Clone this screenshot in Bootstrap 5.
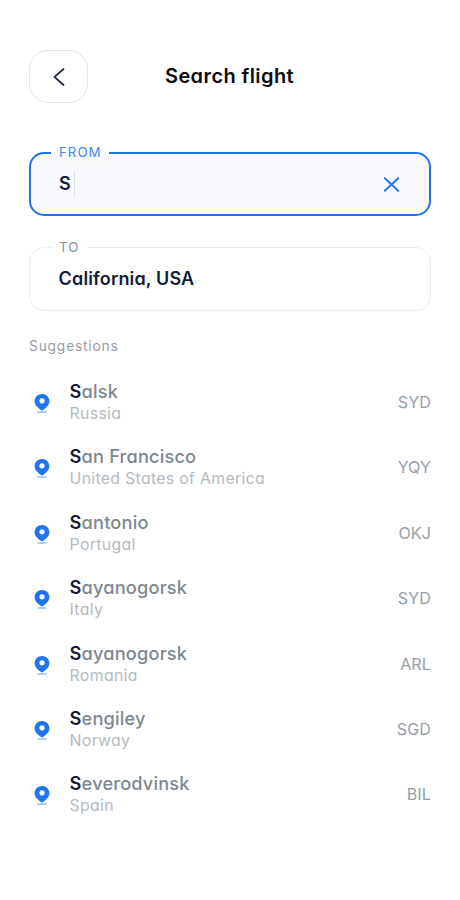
<!DOCTYPE html>
<html lang="en">
<head>
<meta charset="utf-8">
<meta name="viewport" content="width=device-width, initial-scale=1">
<title>Search flight</title>
<link href="https://cdn.jsdelivr.net/npm/bootstrap@5.3.0/dist/css/bootstrap.min.css" rel="stylesheet">
<style>
body{font-family:Inter,"Liberation Sans",sans-serif;font-feature-settings:"cv11";color:#131c37;background:#fff}
.screen{width:460px;height:900px;padding:50px 29px 0 29px}
.back-btn{width:59px;height:53px;border:1.3px solid #e2e3e4;border-radius:19px;background:#fff}
.screen-title{font-size:20px;line-height:24px;color:#0b0b0d;letter-spacing:.4px;margin-right:60px;margin-top:-2px}
.field{height:64px;border-radius:15px;padding:0 30px}
.field-from{border:2px solid #1f75ec;background:#f8fafe;margin-top:49px;padding:0 29px 0 28px}
.field-to{border:1.4px solid #ebecee;margin-top:31px;padding:0 28.6px}
.field-tag{left:20px;top:-2px;height:16px;width:58px;padding-left:8px;background:linear-gradient(#fff 2px,#f8f9fa 2px)}
.field-tag span{display:block;margin-top:-8px;font-size:13.3px;line-height:16px;letter-spacing:1px;color:#3d87ee}
.field-to .field-tag{width:36px;background:#fff;left:21px}
.field-to .field-tag span{color:#8a939d;margin-top:-7px}
.value{font-size:18px;font-weight:600;line-height:24px;letter-spacing:.15px}
.field-to .value{margin-top:-1px}
.caret{width:1px;height:27px;background:#dfe2e8;margin-left:3.5px}
.hint{font-size:13.8px;line-height:18px;margin-top:26px;color:#969ca4;letter-spacing:.8px}
.places{margin-top:24px}
.place{height:65.4px}
.pin{margin:15px 20px 0 4.600px}
.city{font-size:18.2px;line-height:24px;color:#7d8791;letter-spacing:.18px}
.city b{color:#131c37;font-weight:600}
.country{font-size:15.9px;line-height:21px;color:#b5babf;letter-spacing:.28px}
.code{font-size:16.1px;line-height:24px;color:#969ea7;margin-top:11px;letter-spacing:.1px}
</style>
</head>
<body>
<main class="screen mx-auto overflow-hidden">
<header class="d-flex align-items-center">
<button class="back-btn d-flex align-items-center justify-content-center p-0" aria-label="Back"><svg width="12" height="18" viewBox="0 0 12 18" fill="none" stroke="#222b44" stroke-width="1.7" stroke-linecap="round" stroke-linejoin="round"><path d="M10.500 1 1.500 9l9 8"/></svg></button>
<h1 class="screen-title flex-grow-1 text-center fw-semibold mb-0">Search flight</h1>
</header>
<section class="field field-from position-relative d-flex align-items-center">
<div class="field-tag position-absolute"><span>FROM</span></div>
<div class="value">S</div><div class="caret"></div>
<svg class="ms-auto" width="17" height="15" viewBox="0 0 17 15" fill="none" stroke="#1f75ec" stroke-width="1.9" stroke-linecap="round"><path d="m1.800 1.200 13.400 12.600m0-12.600-13.400 12.600"/></svg>
</section>
<section class="field field-to position-relative d-flex align-items-center">
<div class="field-tag position-absolute"><span>TO</span></div>
<div class="value">California, USA</div>
</section>
<h2 class="hint fw-normal mb-0">Suggestions</h2>
<ul class="places list-unstyled mb-0">
<li class="place d-flex"><svg class="pin" width="16" height="20" viewBox="0 0 16 20"><use href="#pin"/></svg><div class="flex-grow-1"><div class="city fw-medium"><b>S</b>alsk</div><div class="country">Russia</div></div><div class="code">SYD</div></li>
<li class="place d-flex"><svg class="pin" width="16" height="20" viewBox="0 0 16 20"><use href="#pin"/></svg><div class="flex-grow-1"><div class="city fw-medium"><b>S</b>an Francisco</div><div class="country">United States of America</div></div><div class="code">YQY</div></li>
<li class="place d-flex"><svg class="pin" width="16" height="20" viewBox="0 0 16 20"><use href="#pin"/></svg><div class="flex-grow-1"><div class="city fw-medium"><b>S</b>antonio</div><div class="country">Portugal</div></div><div class="code">OKJ</div></li>
<li class="place d-flex"><svg class="pin" width="16" height="20" viewBox="0 0 16 20"><use href="#pin"/></svg><div class="flex-grow-1"><div class="city fw-medium"><b>S</b>ayanogorsk</div><div class="country">Italy</div></div><div class="code">SYD</div></li>
<li class="place d-flex"><svg class="pin" width="16" height="20" viewBox="0 0 16 20"><use href="#pin"/></svg><div class="flex-grow-1"><div class="city fw-medium"><b>S</b>ayanogorsk</div><div class="country">Romania</div></div><div class="code">ARL</div></li>
<li class="place d-flex"><svg class="pin" width="16" height="20" viewBox="0 0 16 20"><use href="#pin"/></svg><div class="flex-grow-1"><div class="city fw-medium"><b>S</b>engiley</div><div class="country">Norway</div></div><div class="code">SGD</div></li>
<li class="place d-flex"><svg class="pin" width="16" height="20" viewBox="0 0 16 20"><use href="#pin"/></svg><div class="flex-grow-1"><div class="city fw-medium"><b>S</b>everodvinsk</div><div class="country">Spain</div></div><div class="code">BIL</div></li>
</ul>
</main>
<svg width="0" height="0" class="position-absolute"><defs><g id="pin"><ellipse cx="8" cy="18" rx="5.2" ry="1" fill="#a9cbf8"/><path fill="#1f75ec" d="M8 0C3.800 0 .6 3.200 .6 7.200C.6 11.200 4.200 13.800 6.600 15.700C7.500 16.400 8.500 16.400 9.400 15.700C11.800 13.800 15.400 11.200 15.400 7.200C15.400 3.200 12.200 0 8 0Z"/><circle cx="8" cy="6.800" r="2.600" fill="#fff"/></g></defs></svg>
<script src="https://cdn.jsdelivr.net/npm/bootstrap@5.3.0/dist/js/bootstrap.bundle.min.js"></script>
</body>
</html>
